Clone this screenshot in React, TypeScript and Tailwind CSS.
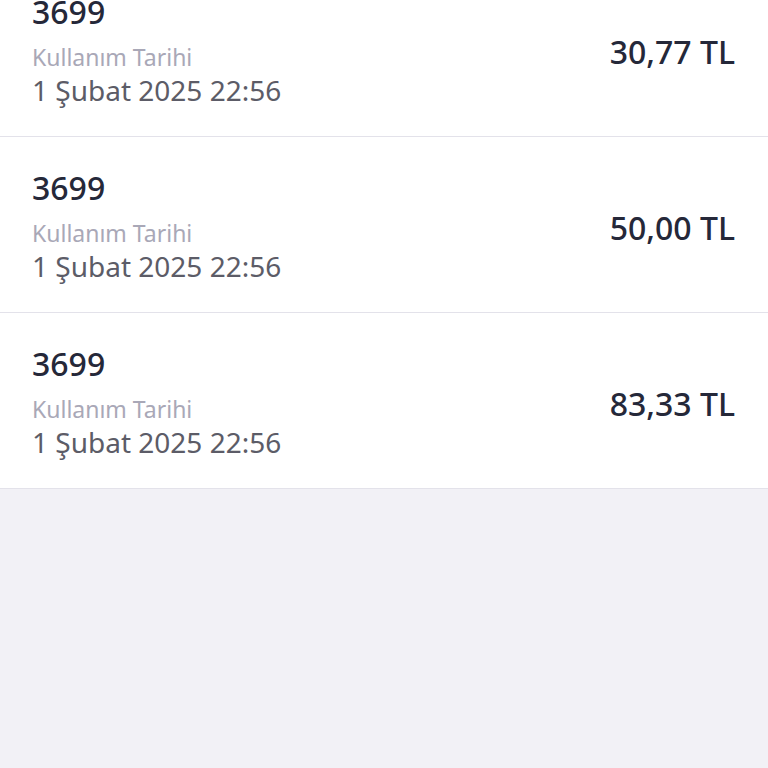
import React from 'react';

interface UsageItem {
  code: string;
  date: string;
  amount: string;
}

const items: UsageItem[] = [
  { code: '3699', date: '1 Şubat 2025 22:56', amount: '30,77 TL' },
  { code: '3699', date: '1 Şubat 2025 22:56', amount: '50,00 TL' },
  { code: '3699', date: '1 Şubat 2025 22:56', amount: '83,33 TL' },
];

const UsageRow: React.FC<{ item: UsageItem }> = ({ item }) => (
  <div className="flex items-start justify-between bg-white pl-8 pr-[33px] pt-[33px] pb-[30px] border-b border-[#e3e2ea]">
    <div className="flex flex-col">
      {/* Kod */}
      <span className="text-[32px] leading-[36px] font-medium text-[#252839]">{item.code}</span>
      <span className="mt-[13px] text-[23px] leading-[28px] text-[#a9a8b7]">Kullanım Tarihi</span>
      <span className="mt-[3px] text-[28px] leading-[32px] text-[#5c5c67]">{item.date}</span>
    </div>
    <span className="mt-[40px] text-[32px] leading-[36px] font-medium text-[#252839]">{item.amount}</span>
  </div>
);

export default function App() {
  return (
    <div
      className="h-[768px] w-[768px] overflow-hidden bg-[#f2f1f6]"
      style={{ fontFamily: '"Noto Sans", sans-serif' }}
    >
      <div className="-mt-[39px]">
        {items.map((item, i) => (
          <UsageRow key={i} item={item} />
        ))}
      </div>
    </div>
  );
}
